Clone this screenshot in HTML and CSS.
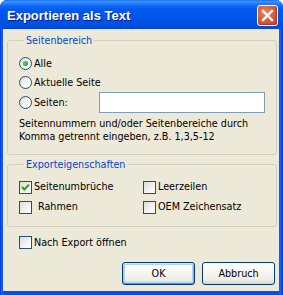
FILE: index.html
```html
<!DOCTYPE html>
<html lang="de">
<head>
<meta charset="utf-8">
<title>Exportieren als Text</title>
<link rel="stylesheet" href="styles.css">
</head>
<body>
<div class="window">
  <div class="titlebar">
    <span class="title">Exportieren als Text</span>
    <span class="close" aria-label="Schließen">
      <svg width="13" height="13" viewBox="0 0 13 13"><path d="M2 2 L11 11 M11 2 L2 11" stroke="#fff" stroke-width="2.4" stroke-linecap="square" fill="none"/></svg>
    </span>
  </div>
  <div class="client">
    <fieldset class="group group-range">
      <legend>Seitenbereich</legend>
      <div class="row"><span class="radio checked"></span><span class="lbl">Alle</span></div>
      <div class="row"><span class="radio"></span><span class="lbl">Aktuelle Seite</span></div>
      <div class="row row-input"><span class="radio"></span><span class="lbl lbl-seiten">Seiten:</span><span class="textbox"></span></div>
      <p class="hint">Seitennummern und/oder Seitenbereiche durch<br>Komma getrennt eingeben, z.B. 1,3,5-12</p>
    </fieldset>
    <fieldset class="group group-props">
      <legend>Exporteigenschaften</legend>
      <div class="grid">
        <div class="crow"><span class="check checked"><svg width="11" height="11" viewBox="0 0 11 11"><path d="M2 5 L4.3 7.5 L9 2.6" stroke="#21A121" stroke-width="2" fill="none"/></svg></span><span class="lbl">Seitenumbrüche</span></div>
        <div class="crow"><span class="check"></span><span class="lbl">Leerzeilen</span></div>
        <div class="crow"><span class="check"></span><span class="lbl lbl-rahmen">Rahmen</span></div>
        <div class="crow"><span class="check"></span><span class="lbl">OEM Zeichensatz</span></div>
      </div>
    </fieldset>
    <div class="crow standalone"><span class="check"></span><span class="lbl">Nach Export öffnen</span></div>
    <div class="buttons">
      <span class="btn default">OK</span>
      <span class="btn">Abbruch</span>
    </div>
  </div>
</div>
</body>
</html>
```

FILE: styles.css
```css
* { box-sizing: border-box; }
html, body { margin: 0; padding: 0; background: #ffffff; }
body {
  font-family: "DejaVu Sans Condensed", "Liberation Sans", Arial, sans-serif;
  font-size: 10.7px;
  color: #000;
}
.window {
  width: 283px;
  height: 295px;
  display: flex;
  flex-direction: column;
  border-radius: 7px 7px 0 0;
  overflow: hidden;
  background: linear-gradient(to right, #0831D9 0, #166AEE 2px, #0A4EE0 3px, #0A4EE0 279px, #166AEE 280px, #0831D9 283px);
}
.titlebar {
  height: 29px;
  flex: none;
  display: flex;
  align-items: center;
  justify-content: space-between;
  padding: 0 5px 0 7px;
  background: linear-gradient(to bottom, #0A5DE8 0, #3D95FF 1px, #2A84FC 3px, #0F66F4 6px, #0058EE 10px, #0056EA 55%, #0053E2 80%, #0046D6 100%);
}
.title {
  color: #fff;
  font-family: "Liberation Sans", Arial, sans-serif;
  font-weight: bold;
  font-size: 13px;
  text-shadow: 1px 1px 0 #0A1883;
  margin-top: 2px;
}
.close {
  width: 21px;
  height: 21px;
  border: 1px solid #fff;
  border-radius: 3px;
  display: flex;
  align-items: center;
  justify-content: center;
  margin-top: 2px;
  background: radial-gradient(circle at 40% 35%, #E9866A 0, #DB5F3E 45%, #C4401F 100%);
  box-shadow: inset -1px -1px 1px rgba(120, 20, 0, 0.4);
}
.client {
  flex: 1;
  margin: 0 4px 4px 3px;
  background: #ECE9D8;
  display: flex;
  flex-direction: column;
}
.group {
  margin: 0 2px 0 4px;
  padding: 0 0 0 11px;
  border: 1px solid #D0D0BF;
  border-radius: 3px;
  min-width: 0;
}
.group legend {
  margin-left: 5px;
  padding: 0 2px;
  color: #0046D5;
  line-height: 13px;
}
.group-range { margin-top: 5px; padding-top: 7px; padding-bottom: 11px; }
.group-props { margin-top: 3px; padding-top: 6px; padding-bottom: 9px; }
.row {
  height: 19px;
  display: flex;
  align-items: center;
}
.row-input { height: 21px; }
.lbl { line-height: 13px; padding-left: 2px; margin-bottom: 1px; white-space: nowrap; }
.lbl-seiten { width: 67px; }
.lbl-rahmen { padding-left: 6px; }
.radio {
  width: 13px;
  height: 13px;
  flex: none;
  border-radius: 50%;
  border: 1px solid #1C5180;
  background: linear-gradient(135deg, #DCDCD7 0, #F4F4F0 50%, #FFFFFF 100%);
  display: flex;
  align-items: center;
  justify-content: center;
}
.radio.checked::after {
  content: "";
  width: 5px;
  height: 5px;
  border-radius: 50%;
  background: radial-gradient(circle at 40% 40%, #5DE05D 0, #21A121 70%);
}
.textbox {
  width: 166px;
  height: 21px;
  border: 1px solid #7F9DB9;
  background: #fff;
}
.hint {
  margin: 4px 0 0 0;
  line-height: 13px;
}
.grid {
  display: grid;
  grid-template-columns: 124px 1fr;
}
.crow {
  height: 20px;
  display: flex;
  align-items: center;
}
.check {
  width: 13px;
  height: 13px;
  flex: none;
  border: 1px solid #1C5180;
  background: linear-gradient(135deg, #DCDCD7 0, #F2F2EE 55%, #FFFFFF 100%);
  display: flex;
  align-items: center;
  justify-content: center;
}
.check svg { display: block; }
.standalone { margin: 6px 0 0 16px; height: 19px; }
.buttons {
  margin-top: 10px;
  display: flex;
  justify-content: flex-end;
  gap: 7px;
  padding-right: 4px;
}
.btn {
  width: 73px;
  height: 23px;
  border: 1px solid #003C74;
  border-radius: 3px;
  display: flex;
  align-items: center;
  justify-content: center;
  background: linear-gradient(to bottom, #FFFFFF 0, #F7F7F3 40%, #EEEDE5 80%, #D8D2C6 100%);
}
.btn.default {
  box-shadow: inset 0 1px 0 #CEE7FF, inset 0 -1px 0 #6982EE, inset 1px 0 0 #A8C6F5, inset -1px 0 0 #89ADE4, inset 0 0 0 2px #B7D0F5;
}
```
